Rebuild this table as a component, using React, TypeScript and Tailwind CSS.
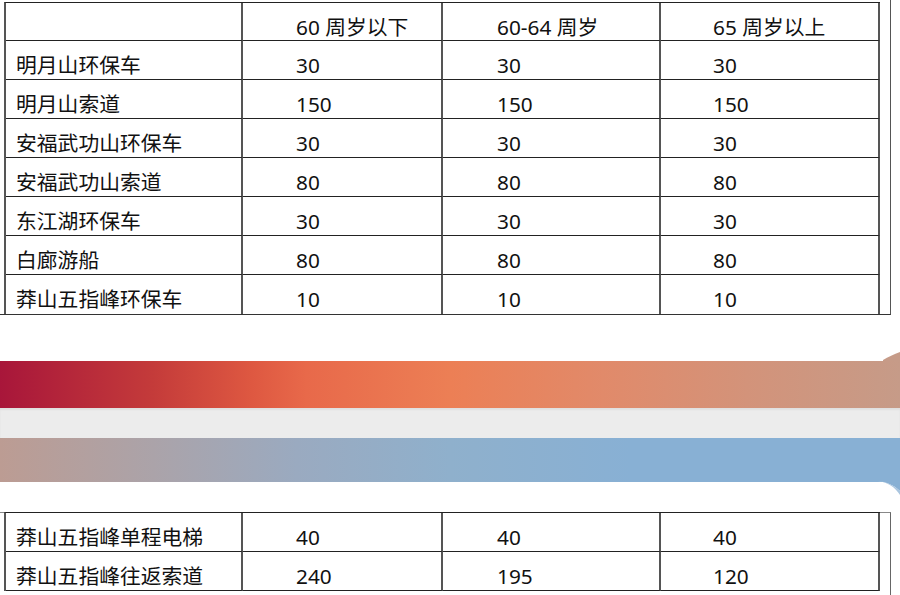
import React from "react";

const font = { fontFamily: '"Noto Sans", "Noto Sans CJK SC", sans-serif' };

const topRows: string[][] = [
  ["", "60 周岁以下", "60-64 周岁", "65 周岁以上"],
  ["明月山环保车", "30", "30", "30"],
  ["明月山索道", "150", "150", "150"],
  ["安福武功山环保车", "30", "30", "30"],
  ["安福武功山索道", "80", "80", "80"],
  ["东江湖环保车", "30", "30", "30"],
  ["白廊游船", "80", "80", "80"],
  ["莽山五指峰环保车", "10", "10", "10"],
];

const bottomRows: string[][] = [
  ["莽山五指峰单程电梯", "40", "40", "40"],
  ["莽山五指峰往返索道", "240", "195", "120"],
];

const pads = ["pl-[10px]", "pl-[53px]", "pl-[54px]", "pl-[52px]"];

function Grid({ rows, lastBorder, firstH }: { rows: string[][]; lastBorder: boolean; firstH: string }) {
  return (
    <div className="grid w-[876px] grid-cols-[237px_200px_218px_219px] border-l-2 border-t border-l-[#555] border-t-[#222]">
      {rows.map((r, i) =>
        r.map((c, j) => (
          <div
            key={i + "-" + j}
            className={
              "border-r-2 border-r-[#555] pt-[12px] text-[20.8px] leading-[24px] text-[#111] whitespace-nowrap " +
              pads[j] +
              " " +
              (i === 0 ? firstH : "h-[39px]") +
              " " +
              (i < rows.length - 1 || lastBorder ? "border-b border-b-[#222]" : "")
            }
          >
            {c}
          </div>
        ))
      )}
    </div>
  );
}

export default function App() {
  return (
    <div className="relative h-[595px] w-[900px] overflow-hidden bg-white" style={font}>
      {/* top table frame */}
      <div className="w-[891px] border-b border-r border-b-[#333] border-r-[#555] pl-[4px] pt-[2px]">
        <Grid rows={topRows} lastBorder={false} firstH="h-[38px]" />
      </div>

      {/* banner */}
      <div className="mt-[46px] h-[47px] w-full bg-[linear-gradient(to_right,#a8163a_0%,#c43b3a_17%,#de5841_28%,#e8694a_34%,#ec7f55_50%,#e18a6a_67%,#d3937a_83%,#c69b88_100%)]" />
      <div className="h-[30px] w-full bg-[#ececec] shadow-[inset_0_2px_2px_rgba(0,0,0,0.05)]" />
      <div className="h-[44px] w-full bg-[linear-gradient(to_right,#bc9c93_0%,#aba3a9_17%,#9aaac0_33%,#8fb0cc_50%,#88b0d4_70%,#88b0d4_100%)]" />

      <svg className="absolute left-[870px] top-[345px]" width="30" height="160" viewBox="0 0 30 160">
        <path d="M13 15 C18 12 24 9 30 7 L30 16 L13 16 Z" fill="#c69b88" />
        <path d="M8 136 C16 137 24 140 30 146 L30 136 Z" fill="#88b0d4" />
        <path d="M10 136 C18 138 25 142 30 150 L30 146 C24 140 16 137 8 136 Z" fill="#a9c5df" />
      </svg>

      {/* bottom table frame */}
      <div className="mt-[30px] w-[891px] border-r border-t border-r-[#666] border-t-[#888] pl-[4px]">
        <div className="-mt-px">
          <Grid rows={bottomRows} lastBorder={true} firstH="h-[39px]" />
        </div>
        <div className="h-[10px]" />
      </div>
    </div>
  );
}
